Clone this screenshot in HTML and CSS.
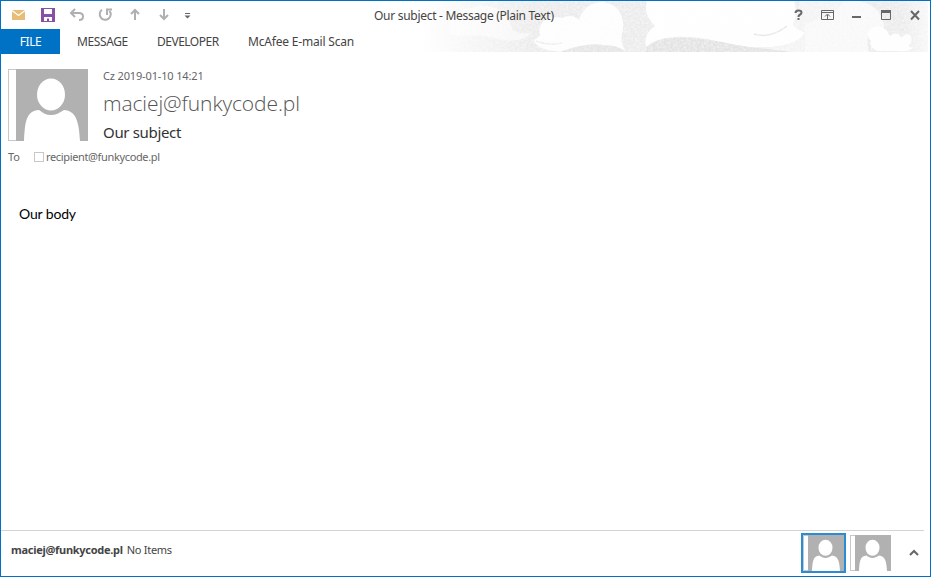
FILE: index.html
```html
<!DOCTYPE html>
<html lang="en">
<head>
<meta charset="utf-8">
<title>Our subject - Message (Plain Text)</title>
<link rel="stylesheet" href="styles.css">
</head>
<body>
<svg width="0" height="0" class="defs">
  <symbol id="person" viewBox="0 0 72 72">
    <rect width="72" height="72" fill="#b1b1b1"/>
    <ellipse cx="35" cy="25.500" rx="14" ry="16" fill="#fff"/>
    <path d="M8 72C9 53 10 42 23 41C27 44 30 46 35 46S43 44 48 41C60 42 63 52 64 72Z" fill="#fff"/>
  </symbol>
</svg>
<main class="window">
  <header class="top">
    <svg class="art" width="508" height="51" viewBox="420 1 508 51">
      <defs>
        <linearGradient id="fade"><stop offset="0" stop-color="#fff" stop-opacity="0"/><stop offset=".22" stop-color="#fff"/><stop offset=".95" stop-color="#fff"/><stop offset="1" stop-color="#fff" stop-opacity=".4"/></linearGradient>
        <mask id="edge"><rect x="420" y="1" width="508" height="51" fill="url(#fade)"/></mask>
        <filter id="grain" x="0" y="0" width="100%" height="100%"><feTurbulence type="fractalNoise" baseFrequency=".45" numOctaves="2" seed="4"/><feColorMatrix values="0 0 0 0 1  0 0 0 0 1  0 0 0 0 1  1.600 0 0 0 -.5"/></filter>
      </defs>
      <g mask="url(#edge)">
        <rect x="420" y="1" width="508" height="51" fill="#ebebeb"/>
        <path d="M450 35C446 20 456 8 472 8C487 2 508 7 512 30C521 35 529 33 531 32C527 40 514 42 502 40C487 36 474 34 463 36Z" fill="#f6f6f6"/>
        <path d="M540 36C537 23 547 14 562 18C567 15 575 15 579 20C582 8 592 2 602 2C617 3 625 15 623 30C620 38 622 45 625 50C600 41 590 49 568 52C550 52 535 48 534 40Z" fill="#fdfdfd"/>
        <path d="M536 41Q548 46 562 43" fill="none" stroke="#ededed" stroke-width="1.500"/>
        <path d="M562 51Q588 42 603 45Q620 45 625 52H560Z" fill="#e4e4e4"/>
        <path d="M647 1H794Q798 15 793 25Q799 31 805 32C798 47 774 48 749 47C720 43 700 35 675 37Q655 38 646 47Q643 34 655 26Q643 15 647 1Z" fill="#fefefe"/>
        <path d="M647 47Q657 37 680 38C718 38 735 47 760 48L796 52H646Z" fill="#e2e2e2"/>
        <path d="M793 25L800 1H845Q833 18 805 23V52H790Q780 50 760 48Q799 46 805 32Q799 31 793 25Z" fill="#f3f3f3"/>
        <path d="M754 34Q770 39 787 26" fill="none" stroke="#e4e4e4" stroke-width="1.500"/>
        <path d="M805 23Q833 18 845 1H858C877 4 884 17 884 28C869 27 865 37 869 52H805Z" fill="#f8f8f8"/>
        <rect x="420" y="1" width="508" height="51" filter="url(#grain)" opacity=".65"/>
        <path d="M871 41C863 32 873 23 883 28C888 30 889 36 890 36C895 31 901 34 901 38C906 31 914 34 911 43Q906 48 913 47Q911 52 897 51H878Q868 47 871 41Z" fill="#fefefe"/>
      </g>
    </svg>
    <div class="titlebar">
      <svg class="quick" width="200" height="26" viewBox="0 0 200 26" fill="none">
        <path d="M12 10h13v10H12z" fill="#e8bd78"/><path d="M12 10.500l6.500 5L25 10.500" stroke="#fff" stroke-width="1.300"/>
        <path d="M41 8h14v14H41z" fill="#8650a5"/><path d="M44 9h8v5h-8zM44 17h8v4h-3v-2.500h-2V21h-3z" fill="#fff"/>
        <path d="M75 9l-4 4 4 4M72 13h7q4 0 4 3.500T79 20" stroke="#b0b0b0" stroke-width="2"/>
        <path d="M102 9.800a5.500 5.500 0 1 0 7.500 1" stroke="#b0b0b0" stroke-width="2"/><path d="M107 15V9.500h5" stroke="#b0b0b0" stroke-width="2"/>
        <path d="M135 20v-9M131 14l4-4 4 4" stroke="#b0b0b0" stroke-width="2"/>
        <path d="M164 9v9M160 15l4 4 4-4" stroke="#b0b0b0" stroke-width="2"/>
        <path d="M185 13.500h5" stroke="#666"/><path d="M184.500 15.500h6l-3 3z" fill="#666"/>
      </svg>
      <h1 class="title">Our subject - Message (Plain Text)</h1>
      <svg class="controls" width="140" height="26" viewBox="790 0 140 26" fill="none" stroke="#686868">
        <path d="M795.500 13q0-2.500 3-2.500t3 2q0 1.500-2 2.500-1 .5-1 2M798.500 18v2" stroke-width="2"/>
        <path d="M821.500 10.500h12v9h-12zM821.500 12.500h12M827.500 19v-4M825 16.500l2.500-2.500 2.500 2.500"/>
        <path d="M852 17h9" stroke-width="2"/>
        <path d="M881.500 10.500h9v9h-9z"/><path d="M881 11.500h10" stroke-width="3"/>
        <path d="M911 11l8 8.500M919 11l-8 8.500" stroke-width="2"/>
      </svg>
    </div>
    <nav class="tabs">
      <a class="file"><span>FILE</span></a>
      <a class="message">MESSAGE</a>
      <a class="developer">DEVELOPER</a>
      <a class="scan">McAfee E-mail Scan</a>
    </nav>
  </header>
  <section class="heading">
    <div class="avatar"><svg><use href="#person"/></svg></div>
    <div class="details">
      <p class="date">Cz 2019-01-10 14:21</p>
      <p class="sender">maciej@funkycode.pl</p>
      <h2 class="subject">Our subject</h2>
    </div>
  </section>
  <div class="to"><span class="label">To</span><i class="presence"></i><span class="recipient">recipient@funkycode.pl</span></div>
  <article class="body"><span>Our body</span></article>
  <footer class="people">
    <p class="status"><b>maciej@funkycode.pl</b><span>No Items</span></p>
    <div class="thumb selected"><div class="avatar small"><svg><use href="#person"/></svg></div></div>
    <div class="thumb"><div class="avatar small"><svg><use href="#person"/></svg></div></div>
    <svg class="chevron" width="10" height="8" viewBox="0 0 10 8"><path d="M1 6l4-4 4 4" fill="none" stroke="#666" stroke-width="2"/></svg>
  </footer>
</main>
</body>
</html>
```
FILE: styles.css
```css
* { box-sizing: border-box; }
body { margin: 0; background: #fff; font: 12px/16px "Noto Sans", "Open Sans", sans-serif; color: #444; }
p, h1, h2 { margin: 0; font-size: inherit; font-weight: 400; }
.defs { position: absolute; }
.window { display: flex; flex-direction: column; width: 931px; height: 577px; border: 1px solid #0072c6; }
.top { position: relative; height: 53px; }
.art { position: absolute; left: 419px; top: 0; }
.titlebar, .tabs { position: relative; display: flex; }
.titlebar { height: 28px; }
.quick, .controls { flex: none; margin-top: -1px; }
.quick { margin-left: -1px; }
.title { width: 182px; margin: 7px 0 0 174px; white-space: nowrap; letter-spacing: -0.29px; }
.controls { margin-left: auto; }
.tabs { height: 25px; line-height: 25px; white-space: nowrap; }
.file { width: 59px; text-align: center; background: #0072c6; color: #fff; letter-spacing: -0.4px; }
.message { width: 80px; padding-left: 17px; letter-spacing: -0.4px; }
.developer { width: 91px; padding-left: 17px; letter-spacing: -0.5px; }
.scan { padding-left: 17px; letter-spacing: -0.19px; }
.heading { display: flex; height: 72px; margin: 15px 0 0 7px; }
.avatar { width: 80px; height: 72px; padding-left: 7px; border: 1px solid #c8c8c8; border-right: 0; }
.avatar svg { display: block; width: 72px; height: 72px; margin-top: -1px; }
.details { padding-left: 15px; margin-top: -1px; white-space: nowrap; }
.date { font-size: 11px; line-height: 15px; color: #666; letter-spacing: -0.15px; }
.sender { margin-top: 6px; font-family: "Open Sans", sans-serif; font-weight: 300; font-size: 21px; line-height: 29px; color: #555; letter-spacing: -0.1px; }
.subject { margin-top: 4px; font-size: 15px; line-height: 20px; color: #333; letter-spacing: -0.33px; }
.to { display: flex; align-items: center; height: 16px; margin: 8px 0 0 7px; font-size: 11px; color: #666; }
.label { width: 26px; }
.presence { width: 10px; height: 10px; margin-top: -1px; border: 1px solid #c8c8c8; }
.recipient { margin-left: 2px; letter-spacing: -0.35px; }
.body { flex: 1; padding: 40px 18px; font: 14px/18px Lato, sans-serif; letter-spacing: -0.15px; color: #000; }
.people { display: flex; height: 46px; margin-right: 6px; border-top: 1px solid #d4d4d4; font-size: 11px; }
.status { width: 800px; flex: none; padding: 11px 0 0 10px; letter-spacing: -0.28px; white-space: nowrap; }
.status span { margin-left: 4px; }
.thumb { flex: none; width: 45px; height: 40px; margin-top: 2px; padding: 2px; }
.thumb + .thumb { margin-left: 2px; }
.thumb.selected { border: 2px solid #2a8dd4; padding: 0; }
.small { width: 41px; height: 36px; padding-left: 4px; }
.small svg { width: 36px; height: 36px; }
.chevron { margin: 18px 0 0 16px; flex: none; }
```
